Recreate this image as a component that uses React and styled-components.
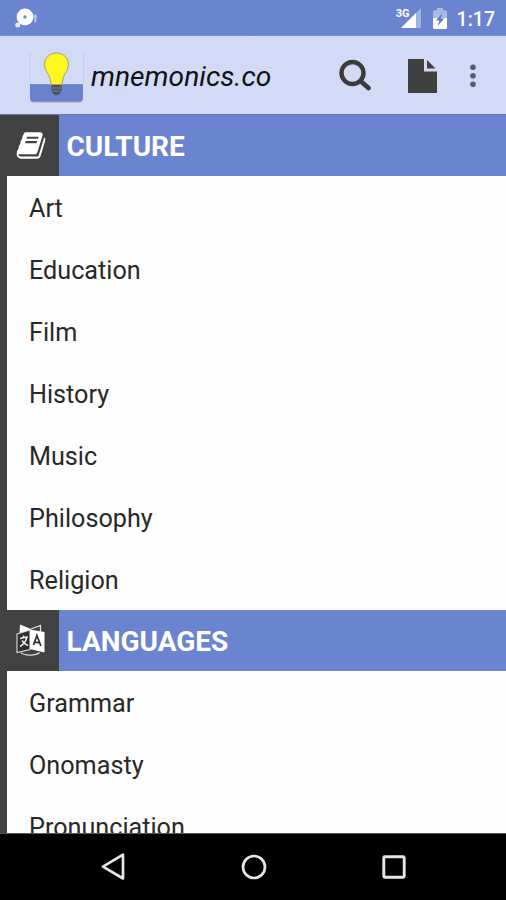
import React from "react";
import styled, { createGlobalStyle } from "styled-components";

const sections = [
  {
    title: "CULTURE",
    icon: "book",
    items: [
      "Art",
      "Education",
      "Film",
      "History",
      "Music",
      "Philosophy",
      "Religion",
    ],
  },
  {
    title: "LANGUAGES",
    icon: "language",
    items: ["Grammar", "Onomasty", "Pronunciation"],
  },
];

const NotificationIcon = () => (
  <svg width="24" height="22" viewBox="0 0 24 22">
    <circle cx="10" cy="10" r="8.4" fill="#fff" />
    <circle cx="10" cy="10" r="1.7" fill="#6d86cf" />
    <circle cx="2.700" cy="18" r="2.5" fill="#e6ecfb" />
    <path d="M18 10.500l2.300-4 2.200 4h-1.200v5h-2v-5z" fill="#b9c7ec" />
  </svg>
);

const SignalIcon = () => (
  <svg width="20" height="20" viewBox="0 0 20 20">
    <path d="M0 20L20 0v20z" fill="#a2b2e2" />
    <path d="M0 20L15 5v15z" fill="#fff" />
  </svg>
);

const BatteryIcon = () => (
  <svg width="14" height="21" viewBox="0 0 14 21">
    <path
      d="M4 0h6v2.200h2.500q1.500 0 1.500 1.500V10H0V3.700q0-1.500 1.500-1.500H4z"
      fill="#a9b8e4"
    />
    <path d="M0 10h14v9.500q0 1.500-1.500 1.500h-11Q0 21 0 19.500z" fill="#fff" />
    <path d="M9.500 5L3 12.500h3.500L4.700 18l6.500-7.500H7.700z" fill="#6078be" />
  </svg>
);

const LogoIcon = () => (
  <svg width="56" height="54" viewBox="0 0 56 54">
    <path d="M1 33V2M54.500 33V2" stroke="#c3cce6" strokeWidth="1" />
    <path d="M1 34h53v13.500q0 4-4 4H5q-4 0-4-4z" fill="#9aa5c6" />
    <path d="M1 33h53v13.500q0 4-4 4H5q-4 0-4-4z" fill="#6882cd" />
    <path d="M1 33.500h53" stroke="#8290bd" strokeWidth="1" />
    <path
      d="M22.500 33.500h10v6l-1.500 3-2 1.500h-3l-2-1.500-1.500-3z"
      fill="#4c5266"
    />
    <path d="M23 37h9M23.500 40h8" stroke="#7b8296" strokeWidth="1" />
    <path
      d="M27.500 2C20.500 2 15.600 7 15.600 13.800c0 5.700 3.800 8.200 5.200 13 .7 2.300.8 4.500 1.400 6.700h10.600c.6-2.200.7-4.400 1.400-6.700 1.400-4.800 5.200-7.300 5.200-13C39.400 7 34.500 2 27.500 2z"
      fill="#fff71f"
      stroke="#aaa45a"
      strokeWidth="1"
    />
  </svg>
);

const SearchIcon = () => (
  <svg width="34" height="34" viewBox="0 0 34 34" fill="none">
    <circle cx="13.500" cy="14" r="11" stroke="#3b3b39" strokeWidth="4.400" />
    <path
      d="M22 22.500l7.500 6.500"
      stroke="#3b3b39"
      strokeWidth="4.800"
      strokeLinecap="round"
    />
  </svg>
);

const FileIcon = () => (
  <svg width="30" height="34" viewBox="0 0 30 34" fill="#40403f">
    <path d="M0 0H16v12.500h13V34H0z" />
    <path d="M19 1l8.500 8.500H19z" />
  </svg>
);

const MoreIcon = () => (
  <svg width="6" height="24" viewBox="0 0 6 24" fill="#515c73">
    <circle cx="3" cy="3.200" r="2.800" />
    <circle cx="3" cy="11.800" r="2.800" />
    <circle cx="3" cy="20.300" r="2.800" />
  </svg>
);

const BookIcon = () => (
  <svg width="30" height="31" viewBox="0 0 1664 1792" fill="#fff">
    <path d="M1639 478q40 57 18 129l-275 906q-19 64-76.500 107.500t-122.500 43.500h-923q-77 0-148.500-53.500t-99.500-131.500q-24-67-2-127 0-4 3-27t4-37q1-8-3-21.500t-3-19.500q2-11 8-21t16.500-23.500 16.500-23.500q23-38 45-91.500t30-91.500q3-10 .5-30t-.5-28q3-11 17-28t17-23q21-36 42-92t25-90q1-9-2.500-32t.5-28q4-13 22-30.500t22-22.500q19-26 42.500-84.500t27.500-96.500q1-8-3-25.500t-2-26.500q2-8 9-18t18-23 17-21q8-12 16.500-30.500t15-35 16-36 19.500-32 26.500-23.500 36-11.500 47.500 5.500l-1 3q38-9 51-9h761q74 0 114 56t18 130l-274 906q-36 119-71.500 153.500t-128.500 34.500h-869q-27 0-38 15-11 16-1 43 24 70 144 70h923q29 0 56-15.500t35-41.500l300-987q7-22 5-57 38 15 59 43zm-1064 2q-4 13 2 22.500t20 9.500h608q13 0 25.500-9.500t16.500-22.500l21-64q4-13-2-22.500t-20-9.500h-608q-13 0-25.500 9.500t-16.500 22.500zm-83 256q-4 13 2 22.500t20 9.500h608q13 0 25.500-9.500t16.500-22.500l21-64q4-13-2-22.500t-20-9.500h-608q-13 0-25.500 9.500t-16.500 22.500z" />
  </svg>
);

const LanguageIcon = () => (
  <svg width="30" height="32" viewBox="0 0 30 32" fill="none">
    <path d="M4 .5l11 4.500v3L3.500 10z" fill="#fff" />
    <path d="M15 5L24.500 1.500v7" stroke="#ddd" strokeWidth="1.300" />
    <path d="M1 10l13-4v19.500L1 28.500z" fill="#2f2f2f" stroke="#ddd" strokeWidth="1.100" />
    <path d="M14 5.500L28.500 8v20.500L14 25z" fill="#fff" />
    <path
      d="M4 14.500l7-1.500c-1 4-3.500 7.500-7 9.500M6 16.500c1.500 2.500 3 3.800 6 5M7.500 11.500v2"
      stroke="#eee"
      strokeWidth="1.500"
    />
    <path
      d="M17.500 21l3.400-9.500 4 10.500M18.800 18.200l4.800.6"
      stroke="#333"
      strokeWidth="1.800"
    />
    <path
      d="M5 28.500c2 3.200 15 3.700 18.500 0"
      stroke="#ddd"
      strokeWidth="1.300"
    />
  </svg>
);

const BackIcon = () => (
  <svg width="28" height="28" viewBox="0 0 28 28" fill="none">
    <path
      d="M24 1.700v23.800L4 13.600z"
      stroke="#e6e6e6"
      strokeWidth="2.700"
      strokeLinejoin="round"
    />
  </svg>
);

const HomeIcon = () => (
  <svg width="28" height="28" viewBox="0 0 28 28" fill="none">
    <circle cx="14" cy="14" r="11" stroke="#e6e6e6" strokeWidth="2.700" />
  </svg>
);

const RecentIcon = () => (
  <svg width="28" height="28" viewBox="0 0 28 28" fill="none">
    <rect
      x="3.800"
      y="3.800"
      width="20.400"
      height="20.400"
      rx="1"
      stroke="#e6e6e6"
      strokeWidth="2.900"
    />
  </svg>
);

const Section = ({ title, icon, items }) => {
  return (
    <div>
      <SectionHeader>
        <IconBox>{icon === "book" ? <BookIcon /> : <LanguageIcon />}</IconBox>
        <SectionTitle>{title}</SectionTitle>
      </SectionHeader>
      <List>
        {items.map((item) => {
          return <Item key={item}>{item}</Item>;
        })}
      </List>
    </div>
  );
};

const App = () => {
  return (
    <Screen>
      <GlobalStyle />
      <StatusBar>
        <NotificationIcon />
        <StatusRight>
          <Network>3G</Network>
          <SignalIcon />
          <BatteryIcon />
          <Clock>1:17</Clock>
        </StatusRight>
      </StatusBar>
      <Toolbar>
        <LogoIcon />
        <Brand>mnemonics.co</Brand>
        <Actions>
          <SearchIcon />
          <FileIcon />
          <MoreIcon />
        </Actions>
      </Toolbar>
      <Content>
        {sections.map((section) => {
          return <Section key={section.title} {...section} />;
        })}
      </Content>
      <NavBar>
        <BackIcon />
        <HomeIcon />
        <RecentIcon />
      </NavBar>
    </Screen>
  );
};

const GlobalStyle = createGlobalStyle`
  * {
    box-sizing: border-box;
  }

  body {
    margin: 0;
    font-family: Roboto, sans-serif;
  }

  svg {
    display: block;
    flex-shrink: 0;
  }
`;

const Screen = styled.div`
  display: flex;
  flex-direction: column;
  width: 506px;
  height: 900px;
  overflow: hidden;
`;

const StatusBar = styled.div`
  display: flex;
  justify-content: space-between;
  flex: 0 0 36px;
  padding: 7px 11px 0 15px;
  background: #6a84cf;
  border-bottom: 1px solid #7d92cb;
`;

const StatusRight = styled.div`
  display: flex;
  align-items: flex-start;
  color: #fff;

  svg {
    margin-top: 1px;
  }

  svg + svg {
    margin: 1px 10px 0 12px;
  }
`;

const Network = styled.span`
  margin-right: -9px;
  font-size: 11px;
  font-weight: 700;
  line-height: 13px;
`;

const Clock = styled.span`
  font-size: 19.5px;
  font-weight: 500;
  line-height: 25px;
`;

const Toolbar = styled.div`
  display: flex;
  align-items: center;
  flex: 0 0 79px;
  padding: 0 30px 0 29px;
  background: linear-gradient(#cddcfb, #d2daf6 5px);
  border-bottom: 1px solid #6878ad;

  > svg {
    margin-top: 5px;
  }
`;

const Brand = styled.h1`
  margin: 2px 0 0 6px;
  color: #111;
  font-size: 28.2px;
  font-style: italic;
  font-weight: 400;
`;

const Actions = styled.div`
  display: flex;
  align-items: center;
  margin: 1px 0 0 auto;

  svg:nth-child(2) {
    margin: 0 32px 0 35px;
  }
`;

const Content = styled.div`
  flex: 1;
  min-height: 0;
  overflow: hidden;
  background: #fdfdfd;
  border-left: 7.5px solid #424242;
`;

const SectionHeader = styled.div`
  display: flex;
  height: 61.4px;
  background: #6a84d0;
`;

const IconBox = styled.div`
  display: flex;
  align-items: center;
  width: 52px;
  padding-left: 8.5px;
  background: #424242;
`;

const SectionTitle = styled.h2`
  margin: 0;
  padding-left: 7.5px;
  color: #fff;
  font-size: 28px;
  font-weight: 700;
  line-height: 63px;
`;

const List = styled.ul`
  margin: 0;
  padding: 0;
  list-style: none;
`;

const Item = styled.li`
  height: 61.9px;
  padding-left: 22px;
  color: #282828;
  font-size: 25.2px;
  line-height: 65.5px;
`;

const NavBar = styled.div`
  display: flex;
  align-items: center;
  justify-content: center;
  gap: 112.5px;
  flex: 0 0 67px;
  padding-left: 1px;
  border-top: 1px solid #555;
  background: #000;
`;

export default App;
